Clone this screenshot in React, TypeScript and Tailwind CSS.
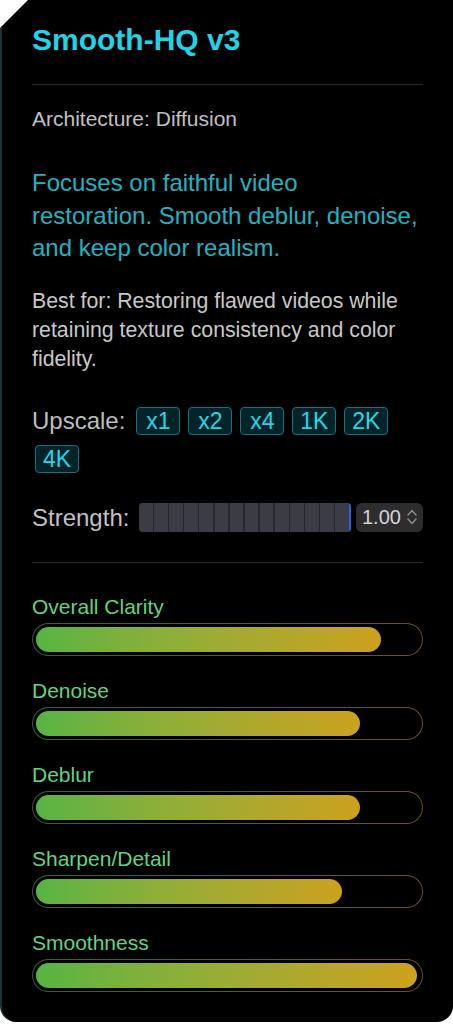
import React from "react";

const UPSCALE = ["x1", "x2", "x4", "1K", "2K", "4K"];

const METRICS: { label: string; value: number }[] = [
  { label: "Overall Clarity", value: 90 },
  { label: "Denoise", value: 84.6 },
  { label: "Deblur", value: 84.6 },
  { label: "Sharpen/Detail", value: 79.8 },
  { label: "Smoothness", value: 99.5 },
];

function MetricBar({ label, value }: { label: string; value: number }) {
  return (
    <div>
      <p className="text-[21px] leading-[24px] text-[#62d384]">{label}</p>
      <div className="mt-[4px] rounded-full bg-gradient-to-r from-[#2a6630] to-[#6a5220] p-px">
        <div className="rounded-full bg-black p-[3px]">
          <div
            className="h-[25px] rounded-full bg-gradient-to-r from-[#55b444] to-[#cca11d]"
            style={{ width: `${value}%` }}
          />
        </div>
      </div>
    </div>
  );
}

export default function App() {
  return (
    <div
      className="min-h-screen bg-white"
      style={{ fontFamily: '"Liberation Sans", Arial, sans-serif' }}
    >
      <div className="h-[1022px] rounded-b-2xl border-l-2 border-[#1b3134] bg-black pl-[30px] pr-[30px] pt-[25px] [clip-path:polygon(28px_0,100%_0,100%_100%,0_100%,0_28px)]">
        <h1 className="text-[30px] font-bold leading-[30px] text-[#22d3e8]">Smooth-HQ v3</h1>
        <div className="mt-[29px] h-px bg-[#2a2a2a]" />

        <p className="mt-[20px] text-[21px] leading-[28px] text-[#c0c0c0]">Architecture: Diffusion</p>

        <p className="mt-[34px] text-[24px] leading-[32.5px] text-[#20b3c3]">
          Focuses on faithful video restoration. Smooth deblur, denoise, and keep color realism.
        </p>

        <p className="mt-[22px] text-[21.3px] leading-[29px] text-[#c8c8c8]">
          Best for: Restoring flawed videos while retaining texture consistency and color fidelity.
        </p>

        <div className="mt-[33px] flex flex-wrap items-center gap-x-[5px] gap-y-[10px]">
          <span className="mr-[3px] text-[24px] leading-[28px] text-[#bdbdbd]">Upscale:</span>
          {UPSCALE.map((s) => (
            <button
              key={s}
              type="button"
              className="ml-[3px] flex h-[28px] w-[44px] items-center justify-center rounded-[4px] border border-[#0e7480] bg-[#04242a] text-[23px] leading-[26px] text-[#25d6e6]"
            >
              {s}
            </button>
          ))}
        </div>

        <div className="mt-[30px] flex items-center">
          <span className="w-[107px] text-[24px] leading-[29px] text-[#c0c0c0]">Strength:</span>
          <div className="flex h-[29px] w-[212px] overflow-hidden rounded-[4px] bg-[#26272c]">
            <div className="flex flex-1 gap-[1.5px]">
              {Array.from({ length: 14 }).map((_, i) => (
                <div key={i} className="flex-1 bg-[#3b3c44]" />
              ))}
            </div>
            <div className="w-[2px] bg-[#2563eb]" />
          </div>
          <div className="ml-[5px] flex h-[29px] flex-1 items-center justify-between rounded-md bg-[#2d2d2f] pl-[6px] pr-[5px]">
            <span className="text-[20px] leading-none text-[#d4d4d4]">1.00</span>
            <svg width="12" height="20" viewBox="0 0 12 20" fill="none" stroke="#8a8a8a" strokeWidth="1.5" strokeLinecap="round" strokeLinejoin="round">
              <path d="M2 8 L6 3.5 L10 8" />
              <path d="M2 12 L6 16.5 L10 12" />
            </svg>
          </div>
        </div>

        <div className="mt-[30px] h-px bg-[#2a2a2a]" />

        <div className="mt-[32px] flex flex-col gap-[23px]">
          {METRICS.map((m) => (
            <MetricBar key={m.label} label={m.label} value={m.value} />
          ))}
        </div>
      </div>
    </div>
  );
}
